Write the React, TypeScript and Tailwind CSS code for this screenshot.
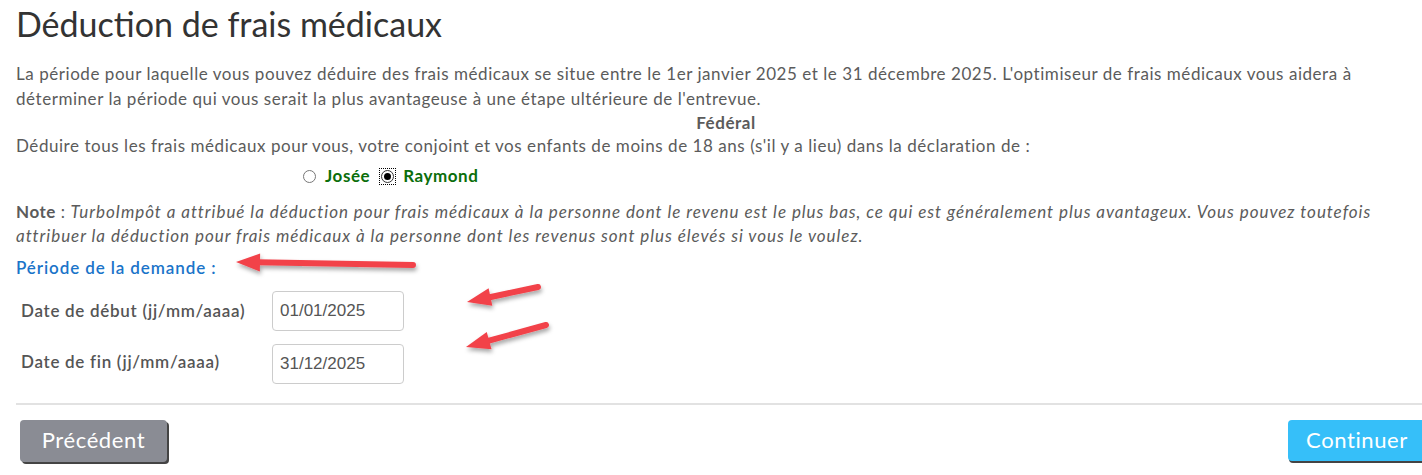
import React from 'react';

const Arrow = ({ x1, y1, x2, y2 }: { x1: number; y1: number; x2: number; y2: number }) => {
  // tail (x1,y1) -> tip (x2,y2)
  const dx = x2 - x1;
  const dy = y2 - y1;
  const len = Math.sqrt(dx * dx + dy * dy);
  const ux = dx / len;
  const uy = dy / len;
  const head = 24;
  const half = 9;
  const bx = x2 - ux * head;
  const by = y2 - uy * head;
  const p1 = `${bx - uy * half},${by + ux * half}`;
  const p2 = `${bx + uy * half},${by - ux * half}`;
  return (
    <g filter="url(#shadow)">
      <line x1={x1} y1={y1} x2={bx + ux * 2} y2={by + uy * 2} stroke="#f2424a" strokeWidth={6} strokeLinecap="round" />
      <polygon points={`${x2},${y2} ${p1} ${p2}`} fill="#f2424a" />
    </g>
  );
};

const inputFont = { fontFamily: '"Liberation Sans", Arial, sans-serif' };

export default function App() {
  return (
    <div className="relative w-[1422px] h-[475px] bg-white overflow-hidden text-[#5b5b5b] tracking-[0.55px]" style={{ fontFamily: 'Lato, "Noto Sans", sans-serif' }}>
      <div className="pl-4">
        <h1 className="pt-[3px] text-[34px] leading-[42px] tracking-normal text-[#333]">Déduction de frais médicaux</h1>
        <p className="mt-[16px] text-[17px] leading-[25px] pr-4">
          La période pour laquelle vous pouvez déduire des frais médicaux se situe entre le 1er janvier 2025 et le 31 décembre 2025. L'optimiseur de frais médicaux vous aidera à déterminer la période qui vous serait la plus avantageuse à une étape ultérieure de l'entrevue.
        </p>
        <div className="pl-[14px] text-center font-bold text-[17px] leading-[23px]">Fédéral</div>
        <p className="text-[17px] leading-[24px]">
          Déduire tous les frais médicaux pour vous, votre conjoint et vos enfants de moins de 18 ans (s'il y a lieu) dans la déclaration de :
        </p>
        <div className="flex items-center pl-[287px] mt-[6px] h-[24px] text-[17px] font-bold text-[#0b6e0b]">
          <span className="w-[13px] h-[13px] rounded-full border border-[#777] bg-white" />
          <span className="ml-[9px]">Josée</span>
          <span className="ml-[9px] p-[1px] border border-dotted border-black">
            <span className="flex items-center justify-center w-[13px] h-[13px] rounded-full border border-[#333] bg-white">
              <span className="w-[7px] h-[7px] rounded-full bg-black" />
            </span>
          </span>
          <span className="ml-[7px]">Raymond</span>
        </div>
        <p className="mt-[12px] text-[17px] leading-[24px] pr-4">
          <span className="font-bold">Note</span> :{' '}
          <i className="tracking-[0.95px]">TurboImpôt a attribué la déduction pour frais médicaux à la personne dont le revenu est le plus bas, ce qui est généralement plus avantageux. Vous pouvez toutefois attribuer la déduction pour frais médicaux à la personne dont les revenus sont plus élevés si vous le voulez.</i>
        </p>
        <div className="mt-[8px] text-[17px] leading-[24px] font-semibold tracking-[0.9px] text-[#1a74c9]">Période de la demande :</div>
        <div className="mt-[11px] pl-[5px] flex flex-col gap-[13px]">
          <div className="flex items-center">
            <span className="w-[251px] text-[17px] font-semibold tracking-[0.7px] text-[#555]">Date de début (jj/mm/aaaa)</span>
            <div className="w-[132px] h-[40px] border border-[#ccc] rounded-[4px] flex items-center px-[7px] text-[17px] tracking-normal text-[#555]" style={inputFont}>01/01/2025</div>
          </div>
          <div className="flex items-center">
            <span className="w-[251px] text-[17px] font-semibold tracking-[0.7px] text-[#555] -mt-[5px]">Date de fin (jj/mm/aaaa)</span>
            <div className="w-[132px] h-[40px] border border-[#ccc] rounded-[4px] flex items-center px-[7px] text-[17px] tracking-normal text-[#555]" style={inputFont}>31/12/2025</div>
          </div>
        </div>
        <div className="mt-[19px] border-t-2 border-[#e2e2e2]" />
        <div className="mt-[15px] flex justify-between">
          <button className="ml-[4px] w-[147px] h-[42px] pb-[4px] rounded-[4px] bg-[#8a8c94] text-white text-[22px] tracking-[0.6px] shadow-[2px_2px_0_#444]">Précédent</button>
          <button className="w-[138px] h-[41px] pb-[3px] rounded-[4px] bg-[#36bff9] text-white text-[22px] tracking-[0.6px] shadow-[1px_2px_0_#444] -mr-[4px]">Continuer</button>
        </div>
      </div>
      <svg className="absolute left-0 top-0 pointer-events-none" width={1422} height={475}>
        <defs>
          <filter id="shadow" x="-20%" y="-50%" width="140%" height="200%">
            <feDropShadow dx="1" dy="3" stdDeviation="2" floodColor="#000" floodOpacity="0.35" />
          </filter>
        </defs>
        <Arrow x1={413} y1={265} x2={236} y2={262} />
        <Arrow x1={538} y1={287} x2={467} y2={302} />
        <Arrow x1={546} y1={325} x2={466} y2={347} />
      </svg>
    </div>
  );
}
